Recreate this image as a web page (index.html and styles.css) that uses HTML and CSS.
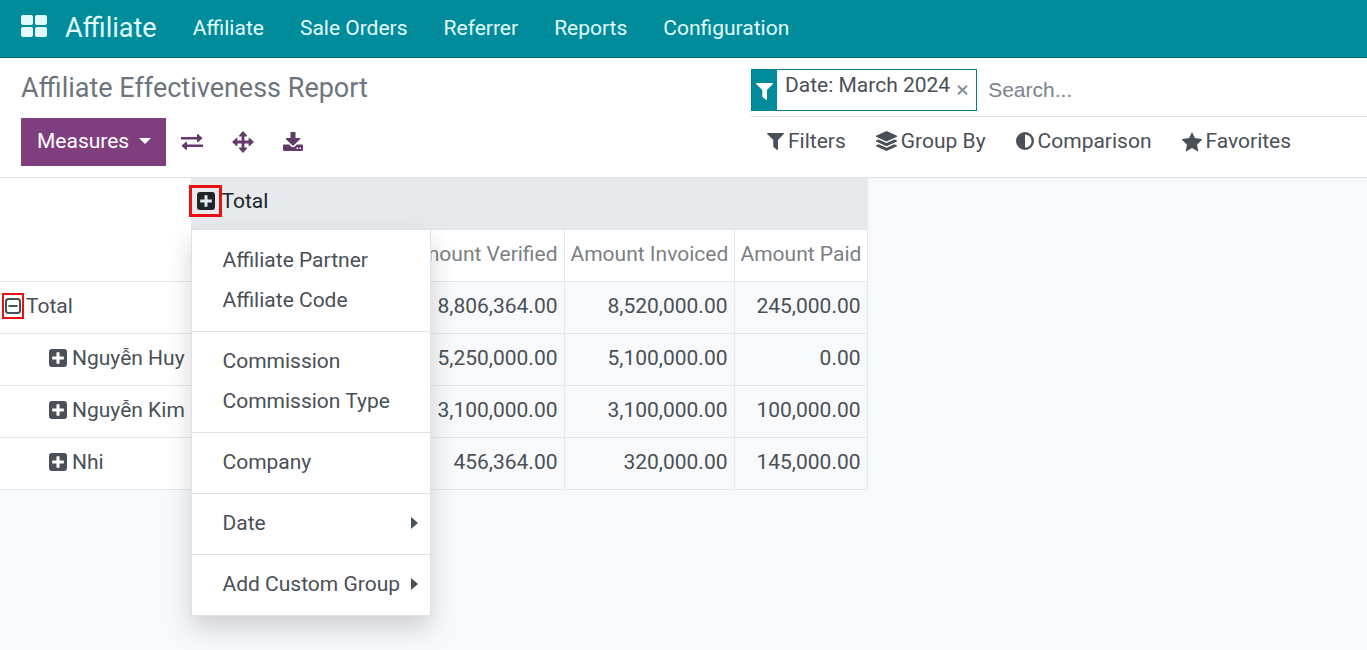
FILE: index.html
```html
<!DOCTYPE html>
<html lang="en">
<head>
<meta charset="utf-8">
<meta name="viewport" content="width=device-width, initial-scale=1">
<title>Affiliate Effectiveness Report</title>
<link rel="stylesheet" href="styles.css">
</head>
<body>
<svg class="sprite" aria-hidden="true">
  <symbol id="plus" viewBox="0 0 18 18"><path fill-rule="evenodd" d="M3 0h12a3 3 0 0 1 3 3v12a3 3 0 0 1-3 3H3a3 3 0 0 1-3-3V3a3 3 0 0 1 3-3zM7.500 3.200v4.300H3.200v3h4.300v4.300h3v-4.300h4.300v-3h-4.300V3.200z"/></symbol>
  <symbol id="funnel" viewBox="0 0 17 17"><path d="M.6 0h15.800c.6 0 .8.700.4 1.100L11 7v9.300c0 .6-.6.900-1.100.5l-3.200-2.600a1 1 0 0 1-.4-.8V7L.2 1.100C-.2.700 0 0 .6 0z"/></symbol>
</svg>
<nav class="navbar">
  <button class="apps" aria-label="Apps">
    <svg width="26" height="22" viewBox="0 0 26 22"><rect width="12" height="10" rx="2"/><rect x="14" width="12" height="10" rx="2"/><rect y="12" width="12" height="10" rx="2"/><rect x="14" y="12" width="12" height="10" rx="2"/></svg>
  </button>
  <a class="brand" href="#">Affiliate</a>
  <a class="nav-link" href="#">Affiliate</a>
  <a class="nav-link" href="#">Sale Orders</a>
  <a class="nav-link" href="#">Referrer</a>
  <a class="nav-link" href="#">Reports</a>
  <a class="nav-link" href="#">Configuration</a>
</nav>
<header class="control-panel">
  <div class="panel-left">
    <h1 class="title">Affiliate Effectiveness Report</h1>
    <div class="toolbar">
      <button class="measures">Measures <svg width="12" height="6" viewBox="0 0 12 6"><path d="M0 0h12L6 6z"/></svg></button>
      <button class="tool" aria-label="Flip axis"><svg width="22" height="16" viewBox="0 0 22 16"><path d="M0 3h16V.8c0-.7.600-.9 1.100-.5l4 3.500c.4.300.4.700 0 1L17.100 8c-.5.400-1.100.1-1.100-.5V5.600H0zM22 13H6v2.200c0 .7-.600.9-1.100.5l-4-3.500c-.4-.3-.4-.7 0-1L4.900 8c.5-.4 1.100-.1 1.100.5v1.900h16z"/></svg></button>
      <button class="tool" aria-label="Expand all"><svg width="22" height="22" viewBox="0 0 22 22"><path d="M11 0l4 4.400c.3.400.1 1-.5 1h-2.100v4.200h4.200V7.500c0-.6.600-.8 1-.5L22 11l-4.400 4c-.4.300-1 .1-1-.5v-2.100h-4.200v4.200h2.100c.6 0 .8.600.5 1L11 22l-4-4.400c-.3-.4-.1-1 .5-1h2.100v-4.200H5.400v2.100c0 .6-.6.800-1 .5L0 11l4.400-4c.4-.3 1-.1 1 .5v2.100h4.200V5.400H7.500c-.6 0-.8-.6-.5-1z"/></svg></button>
      <button class="tool" aria-label="Download"><svg width="20" height="20" viewBox="0 0 20 20"><path fill-rule="evenodd" d="M7.500 0h5v6h4c.8 0 1 .8.500 1.300l-6.200 6c-.5.400-1.100.4-1.600 0L3 7.300C2.500 6.800 2.700 6 3.500 6h4zM1.200 12.500h5l1.900 1.900c1.100 1 2.700 1 3.800 0l1.900-1.900h5c.7 0 1.200.5 1.200 1.200v4c0 .7-.5 1.200-1.200 1.200H1.200C.5 18.900 0 18.400 0 17.700v-4c0-.7.500-1.200 1.200-1.200zM13.500 15.600v1.500H15v-1.500zM16.500 15.600v1.500H18v-1.500z"/></svg></button>
    </div>
  </div>
  <div class="panel-right">
    <div class="search">
      <div class="facet">
        <span class="facet-icon"><svg width="17" height="17"><use href="#funnel"/></svg></span>
        <span class="facet-label">Date: March 2024</span>
        <button class="facet-remove" aria-label="Remove filter"><svg width="11" height="10" viewBox="0 0 11 10"><path d="M1 .8l9 8.400M10 .8L1 9.200"/></svg></button>
      </div>
      <input class="search-input" type="text" placeholder="Search..." aria-label="Search">
    </div>
    <div class="options">
      <button class="option"><svg width="17" height="17"><use href="#funnel"/></svg>Filters</button>
      <button class="option"><svg width="21" height="20" viewBox="0 0 21 20"><path d="M10.500 0L21 4.800v.9l-10.500 4.700L0 5.700v-.9zM0 9.600l2.600-1.200 7.900 3.600 7.900-3.600L21 9.600v.8l-10.500 4.800L0 10.400zM0 14.400l2.600-1.200 7.900 3.600 7.900-3.600 2.600 1.200v.8L10.500 20 0 15.200z"/></svg>Group By</button>
      <button class="option"><svg width="18" height="18" viewBox="0 0 18 18"><path fill-rule="evenodd" d="M9 0a9 9 0 1 1 0 18A9 9 0 0 1 9 0zm0 2.400v13.200a6.600 6.600 0 0 0 0-13.200z"/></svg>Comparison</button>
      <button class="option"><svg class="star" width="20" height="19" viewBox="0 0 20 19"><path d="M10 0l2.900 6.100 6.600.9c.5.100.7.600.3 1L15 12.700l1.200 6c.1.500-.3.700-.7.500L10 16.100l-5.500 3.100c-.4.200-.8 0-.7-.5l1.200-6L.2 8C-.2 7.600 0 7.100.5 7l6.600-.9z"/></svg>Favorites</button>
    </div>
  </div>
</header>
<main class="content">
  <table class="pivot">
    <colgroup><col class="col-name"><col class="col-first"><col class="col-verified"><col class="col-invoiced"><col class="col-paid"></colgroup>
    <thead>
      <tr>
        <td class="corner" rowspan="2"></td>
        <th class="group" colspan="4">
          <div class="group-head">
            <button class="toggle"><span class="mark"><svg width="18" height="18"><use href="#plus"/></svg></span>Total</button>
            <div class="menu">
              <button class="item">Affiliate Partner</button>
              <button class="item">Affiliate Code</button>
              <hr class="divider">
              <button class="item">Commission</button>
              <button class="item">Commission Type</button>
              <hr class="divider">
              <button class="item">Company</button>
              <hr class="divider">
              <button class="item">Date<svg class="caret" width="7" height="12" viewBox="0 0 7 12"><path d="M0 0l7 6-7 6z"/></svg></button>
              <hr class="divider">
              <button class="item">Add Custom Group<svg class="caret" width="7" height="12" viewBox="0 0 7 12"><path d="M0 0l7 6-7 6z"/></svg></button>
            </div>
          </div>
        </th>
      </tr>
      <tr class="measure-row"><th></th><th>Amount Verified</th><th>Amount Invoiced</th><th>Amount Paid</th></tr>
    </thead>
    <tbody>
      <tr><th class="total-name"><button class="toggle"><span class="mark mark-small"><svg class="minus" width="16" height="16" viewBox="0 0 16 16"><rect x="1" y="1" width="14" height="14" rx="2.500"/><path d="M3.500 8h9"/></svg></span>Total</button></th><td></td><td>8,806,364.00</td><td>8,520,000.00</td><td>245,000.00</td></tr>
      <tr><th class="child"><button class="toggle"><svg width="18" height="18"><use href="#plus"/></svg>Nguyễn Huy</button></th><td></td><td>5,250,000.00</td><td>5,100,000.00</td><td>0.00</td></tr>
      <tr><th class="child"><button class="toggle"><svg width="18" height="18"><use href="#plus"/></svg>Nguyễn Kim</button></th><td></td><td>3,100,000.00</td><td>3,100,000.00</td><td>100,000.00</td></tr>
      <tr><th class="child"><button class="toggle"><svg width="18" height="18"><use href="#plus"/></svg>Nhi</button></th><td></td><td>456,364.00</td><td>320,000.00</td><td>145,000.00</td></tr>
    </tbody>
  </table>
</main>
</body>
</html>
```
FILE: styles.css
```css
* { box-sizing: border-box; }
body {
  margin: 0;
  min-height: 100vh;
  background: #f8f9fb;
  color: #495057;
  font: 21px/32px Roboto, "Noto Sans", sans-serif;
}
button {
  margin: 0;
  padding: 0;
  border: 0;
  background: none;
  color: inherit;
  font: inherit;
  text-align: left;
  white-space: nowrap;
  cursor: pointer;
}
svg { display: block; flex: none; fill: currentColor; }
.sprite { position: absolute; width: 0; height: 0; }

.navbar {
  display: flex;
  align-items: center;
  height: 58px;
  padding: 0 21px 2px;
  background: #008c9b;
  border-bottom: 1px solid #00646f;
  color: #e3fafc;
}
.navbar a { color: inherit; text-decoration: none; white-space: nowrap; }
.apps { padding-bottom: 3px; }
.brand { margin: 0 18px; font-size: 27px; }
.nav-link { padding: 0 18px; }

.control-panel {
  display: flex;
  min-height: 120px;
  padding-left: 21px;
  background: #fff;
  border-bottom: 1px solid #dee2e6;
}
.panel-left { flex: 1; }
.panel-right { width: 616px; padding-top: 11px; }
.title {
  margin: 0;
  padding: 10px 0;
  color: #6c757d;
  font-size: 27px;
  font-weight: 400;
  line-height: 40px;
}
.toolbar { display: flex; align-items: center; color: #643a6b; }
.measures {
  display: flex;
  align-items: center;
  gap: 10px;
  height: 48px;
  margin-right: 15px;
  padding: 0 15px 2px 16px;
  background: #7f3f7f;
  color: #fff;
}
.tool { margin-right: 29px; padding-bottom: 1px; }

.search {
  display: flex;
  height: 48px;
  padding-bottom: 5px;
  border-bottom: 1px solid #dee2e6;
}
.facet { display: flex; border: 1px solid #00808c; }
.facet-icon {
  display: flex;
  align-items: center;
  padding: 2px 4px 0;
  background: #008c9b;
  color: #fff;
}
.facet-label { padding: 0 7px 0 8px; line-height: 30px; white-space: nowrap; }
.facet-remove { padding-right: 8px; }
.facet-remove svg { fill: none; stroke: #868e96; stroke-width: 2; }
.search-input {
  flex: 1;
  min-width: 0;
  padding: 0 11px;
  border: 0;
  outline: 0;
  background: none;
  color: #495057;
  font: 21px "Liberation Sans", Arial, sans-serif;
}
.search-input::placeholder { color: #7b838b; opacity: 1; }
.options { display: flex; gap: 30px; padding: 8px 16px; }
.option { display: flex; align-items: center; gap: 4px; }
.star { overflow: visible; }

.pivot { border-collapse: collapse; table-layout: fixed; width: 867px; color: #495057; }
.col-name { width: 191px; }
.col-first { width: 203px; }
.col-verified { width: 170px; }
.col-invoiced { width: 170px; }
.col-paid { width: 133px; }
.pivot th, .pivot td {
  height: 52px;
  padding: 0 6px 2px;
  border: 1px solid #e4e8ec;
  font-weight: 400;
  text-align: right;
  white-space: nowrap;
}
.pivot tbody td { background: #f8f9fb; }
.pivot tbody th, .pivot .corner, .pivot .measure-row th { background: #fff; }
.pivot .measure-row th { color: #7b8084; }
.pivot tr > :first-child { border-left: 0; }
.pivot thead tr:first-child > * { border-top: 0; }
.pivot .group { height: 51px; padding: 0; background: #e7eaed; color: #212529; }
.group-head { position: relative; display: flex; align-items: center; height: 50px; margin-left: -3px; padding-bottom: 4px; }
.toggle { display: flex; align-items: center; gap: 5px; }
.mark { margin-right: -5px; padding: 4px 4px 4px 5px; border: 3px solid #e81010; }
.pivot .total-name { padding-left: 2px; }
.mark-small { margin-right: -3px; padding: 3px 1px; border-width: 2px; }
.minus { fill: none; stroke: currentColor; stroke-width: 2; }
.pivot .child { padding-left: 49px; }

.menu {
  position: absolute;
  z-index: 2;
  top: 100%;
  left: 2px;
  width: 240px;
  margin-top: 1px;
  padding: 11px 0 10px;
  background: #fff;
  border: 1px solid #dee2e6;
  box-shadow: 0 12px 24px rgba(0, 0, 0, 0.17);
  color: #495057;
}
.item {
  display: flex;
  align-items: center;
  justify-content: space-between;
  width: 100%;
  height: 40px;
  padding: 0 12px 3px 31px;
}
.divider { height: 1px; margin: 10px 0; border: 0; background: #dee2e6; }
```
